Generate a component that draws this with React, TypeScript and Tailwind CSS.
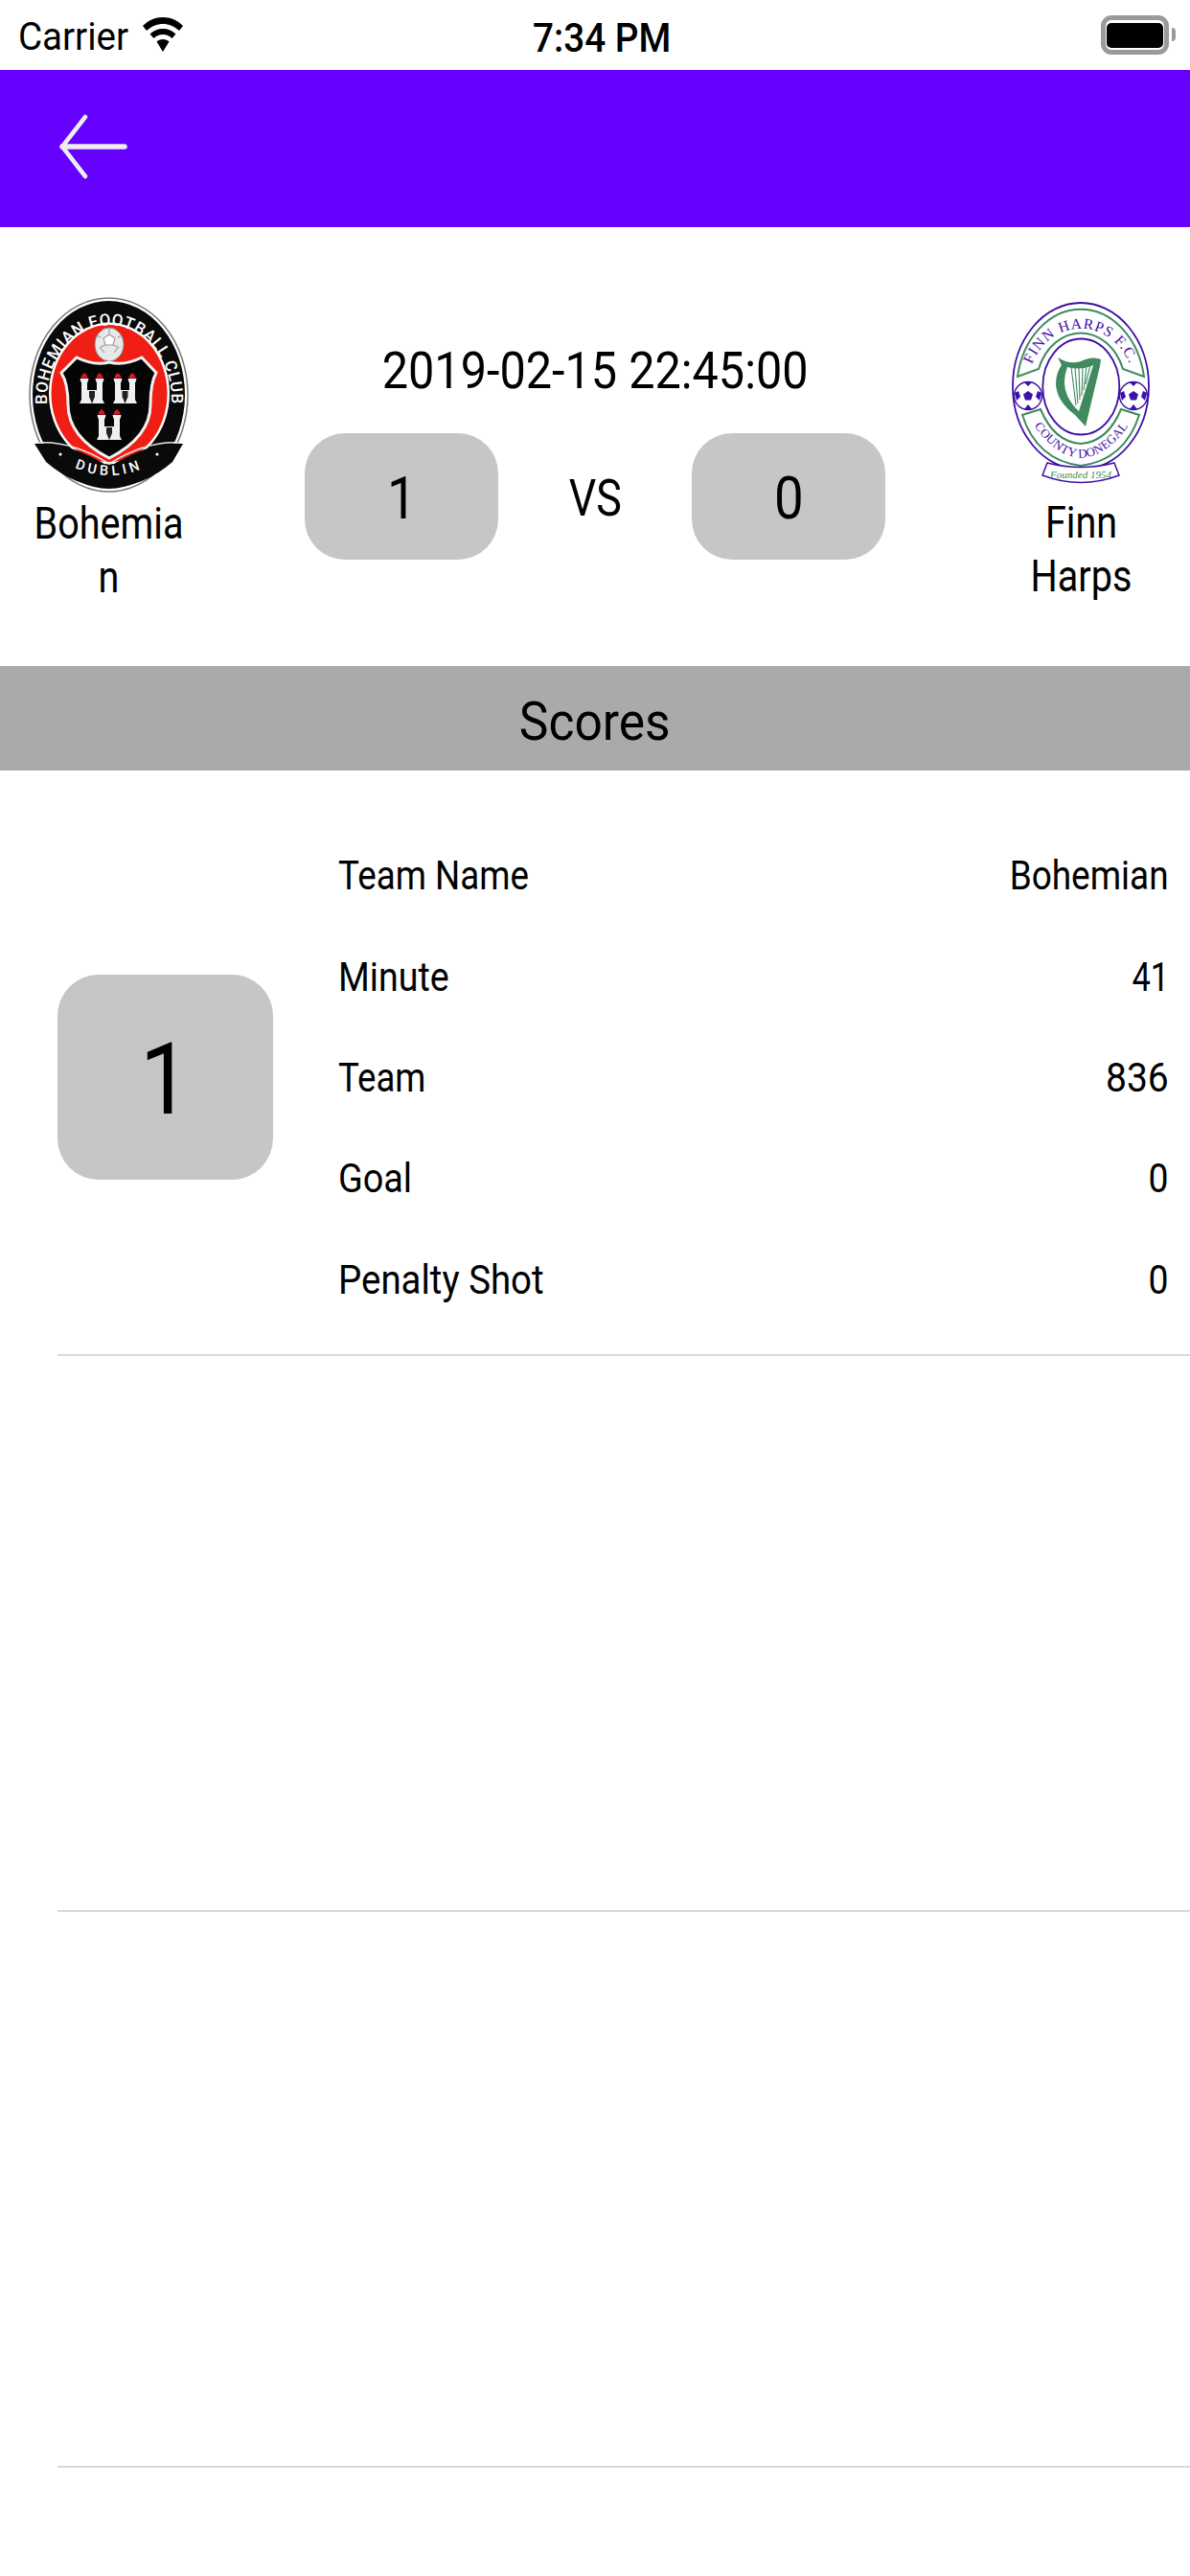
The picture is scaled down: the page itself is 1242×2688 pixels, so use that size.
function Tower({ x, y }: { x: number; y: number }) {
  return (
    <g>
      <path d={`M${x} ${y - 1}c2.500 2 3.500 3.500 3.500 5.500h-7c0-2 1-3.500 3.500-5.500z`} fill="#e3141c" />
      <path d={`M${x - 4.500} ${y + 5}h9l-1 4h-0.500v18l2 4h-10l2-4v-18h-0.500z`} fill="#f0f0f0" />
    </g>
  );
}

function TowerPair({ a, b, y }: { a: number; b: number; y: number }) {
  const m = (a + b) / 2;
  return (
    <g>
      <rect x={a} y={y + 17} width={b - a} height={14} fill="#f0f0f0" />
      <path d={`M${m - 3} ${y + 18}h6v6l-3 7-3-7z`} fill="#222" />
      <Tower x={a} y={y} />
      <Tower x={b} y={y} />
    </g>
  );
}

function BohemianLogo() {
  return (
    <svg width="167" height="204" viewBox="0 0 167 204" className="shrink-0">
      <defs>
        <path id="boh-top" d="M24 136 A65 77 0 1 1 144 136" />
        <path id="boh-bot" d="M36 172 Q84 200 132 172" />
      </defs>
      <ellipse cx="83.500" cy="102" rx="82.500" ry="101" fill="#fff" stroke="#777" strokeWidth="1.500" />
      <ellipse cx="83.500" cy="102" rx="79.500" ry="98" fill="#0a0a0a" />
      <ellipse cx="84" cy="100.500" rx="63" ry="74" fill="#fff" />
      <ellipse cx="84" cy="100.500" rx="60.500" ry="71.500" fill="#f01e14" />
      <path d="M6 153 Q40 150 84 177 Q128 150 161 153 L150 172 Q120 198 84 199 Q48 198 18 172 Z" fill="#0a0a0a" />
      <path d="M11 152 Q45 150 84 174 Q123 150 156 152" fill="none" stroke="#e8e8e8" strokeWidth="1.500" />
      <ellipse cx="84" cy="49.500" rx="15" ry="17.500" fill="#e8e8e8" stroke="#888" strokeWidth="1" />
      <path d="M84 39l6 4-2 7h-8l-2-7zM74 52l5 6M94 52l-5 6M75 42l-4-2M93 42l4-2M84 39v-6M80 50l-5 2M88 50l5 2" fill="#fff" stroke="#999" strokeWidth="1.100" />
      <path d="M34 79 L50 63 Q68 72 84 68 Q100 72 118 63 L133 79 Q127 90 127 112 Q127 146 84 168 Q41 146 41 112 Q41 90 34 79 Z" fill="#050505" stroke="#f2f2f2" strokeWidth="3" />
      <TowerPair a={58} b={74} y={80} />
      <TowerPair a={93} b={108} y={80} />
      <TowerPair a={76} b={92} y={118} />
      <text fill="#fff" fontSize="17" fontWeight="500" letterSpacing="0.6" className="font-['Roboto',sans-serif]">
        <textPath href="#boh-top" startOffset="50%" textAnchor="middle">BOHEMIAN FOOTBALL CLUB</textPath>
      </text>
      <text fill="#fff" fontSize="14.500" fontWeight="500" letterSpacing="4" className="font-['Roboto',sans-serif]">
        <textPath href="#boh-bot" startOffset="50%" textAnchor="middle">DUBLIN</textPath>
      </text>
      <circle cx="33" cy="164" r="1.600" fill="#fff" />
      <circle cx="134" cy="164" r="1.600" fill="#fff" />
    </svg>
  );
}

function Ball({ cx, cy }: { cx: number; cy: number }) {
  return (
    <g>
      <circle cx={cx} cy={cy} r={14.500} fill="#fff" stroke="#3d10a8" strokeWidth="1.400" />
      <path d={`M${cx} ${cy - 5}l5 3.500-2 6h-6l-2-6z`} fill="#3d10a8" />
      <path d={`M${cx - 4} ${cy - 14}h8l-4 4zM${cx - 14} ${cy - 3}l4-2 2 6-4 4zM${cx + 14} ${cy - 3}l-4-2-2 6 4 4zM${cx - 4} ${cy + 14}l4-5 4 5z`} fill="#3d10a8" />
    </g>
  );
}

function FinnLogo() {
  return (
    <svg width="144" height="196" viewBox="0 0 144 196" className="shrink-0">
      <defs>
        <path id="finn-top" d="M19.500 70 A55 60 0 0 1 124.500 70" />
        <path id="finn-bot" d="M20 125 Q72 200 125 125" />
      </defs>
      <ellipse cx="72" cy="88" rx="71" ry="87" fill="#fff" stroke="#3d10a8" strokeWidth="1.800" />
      <path d="M6 78 A67 85 0 0 1 138 78 L116 70 A47 58 0 0 0 28 70 Z" fill="#fff" stroke="#3f8a5f" strokeWidth="2" />
      <path d="M11 118 Q26 165 72 171 Q118 165 133 118 L114 112 Q100 146 72 148 Q44 146 30 112 Z" fill="#fff" stroke="#3f8a5f" strokeWidth="2" />
      <ellipse cx="72.300" cy="88.500" rx="40" ry="50" fill="#fff" stroke="#3d10a8" strokeWidth="1.800" />
      <text fill="#3d10a8" fontSize="15.500" fontFamily="'Liberation Serif',serif" letterSpacing="1">
        <textPath href="#finn-top" startOffset="50%" textAnchor="middle">FINN HARPS F.C.</textPath>
      </text>
      <text fill="#3d10a8" fontSize="13" fontFamily="'Liberation Serif',serif" letterSpacing="0.2">
        <textPath href="#finn-bot" startOffset="50%" textAnchor="middle">COUNTY DONEGAL</textPath>
      </text>
      <Ball cx={17} cy={98} />
      <Ball cx={127} cy={98} />
      <path d="M48 58 Q60 66 72 62 Q84 56 93 60 L92 67 L77 130 L66 118 Q47 104 46 86 Q46 74 52 66 Z" fill="#3f8a5f" />
      <path d="M58 68 Q52 84 58 98 Q63 108 70 114 L85 66 Q72 72 58 68 Z" fill="#fff" />
      <path d="M62 68L67 108M66 69L69 106M70 69L71 102M74 68L73 98M78 67L75 92M82 66L77 86" stroke="#3f8a5f" strokeWidth="1.100" fill="none" />
      <path d="M37 168 Q72 177 107 168 L112 181 Q72 196 32 181 Z" fill="#fff" stroke="#3d10a8" strokeWidth="1.500" />
      <text x="72" y="184" fill="#3f8a5f" fontSize="11" textAnchor="middle" fontFamily="'Liberation Serif',serif" fontStyle="italic">Founded 1954</text>
    </svg>
  );
}

function Row({ label, value, labelClass, valueClass }: { label: string; value: string; labelClass: string; valueClass: string }) {
  return (
    <div className="flex justify-between items-center h-[105.300px] text-[42px] leading-none text-black">
      <span className={`inline-block origin-left ${labelClass}`}>{label}</span>
      <span className={`inline-block origin-right ${valueClass}`}>{value}</span>
    </div>
  );
}

function Pill({ v }: { v: string }) {
  return (
    <div className="w-[202px] h-[132px] bg-[#c6c6c6] rounded-[42px] flex items-center justify-center text-[62px] leading-none pt-[4px]">
      <span className="inline-block scale-x-[0.88]">{v}</span>
    </div>
  );
}

export default function App() {
  return (
    <div className="w-[1242px] h-[2688px] bg-white overflow-hidden text-black font-['Roboto',sans-serif]">
      <div className="h-[73px] flex items-center relative pl-[19px]">
        <span className="text-[41px] leading-none pt-[4px] inline-block origin-left scale-x-[0.94]">Carrier</span>
        <svg width="42" height="36" viewBox="0 0 42 36" className="ml-[8px] -mt-[2px]" fill="#000">
          <path d="M21 0C13 0 6 3 0 9l4 5c5-4.500 11-7 17-7s12 2.500 17 7l4-5C36 3 29 0 21 0z" />
          <path d="M21 12c-5.500 0-10 2-13.500 5.500l4 4.500c2.500-2.500 6-4 9.500-4s7 1.500 9.500 4l4-4.500C31 14 26.500 12 21 12z" />
          <path d="M21 23c-3 0-5 1-6.500 2.500L21 36l6.500-10.500C26 24 24 23 21 23z" />
        </svg>
        <span className="absolute left-[556px] top-[18px] text-[43px] leading-none font-medium inline-block origin-left scale-x-[0.9]">7:34 PM</span>
        <div className="absolute left-[1149px] top-[16px] w-[71px] h-[41px] border-[5px] border-[#9a9a9a] rounded-[11px] flex items-center justify-center">
          <div className="w-[59px] h-[26px] bg-black rounded-[5px]" />
        </div>
        <div className="absolute left-[1223px] top-[29px] w-[4px] h-[14px] bg-[#9a9a9a] rounded-r-[4px]" />
      </div>

      <div className="h-[164px] bg-[#6600ff] flex items-center pl-[60px]">
        <svg width="76" height="68" viewBox="0 0 76 68" fill="none" stroke="#eeeeee" strokeLinecap="round" strokeLinejoin="round" className="-mt-[4px]">
          <path d="M29 3L5 34L29 65" strokeWidth="4.500" />
          <path d="M5 34H70" strokeWidth="5.500" />
        </svg>
      </div>

      <div className="h-[458px] flex pt-[73px]">
        <div className="w-[170px] ml-[28px] shrink-0 flex flex-col items-center">
          <BohemianLogo />
          <div className="w-[195px] shrink-0 text-center text-[46px] leading-[56px] break-all mt-[4px] scale-x-[0.86]">Bohemian</div>
        </div>
        <div className="flex-1 flex flex-col items-center pt-[50px] pl-[1px]">
          <div className="text-[54px] leading-none whitespace-nowrap scale-x-[0.9]">2019-02-15 22:45:00</div>
          <div className="flex items-center mt-[38px]">
            <Pill v="1" />
            <div className="w-[202px] text-center text-[54px] leading-none pt-[4px]"><span className="inline-block scale-x-[0.83]">VS</span></div>
            <Pill v="0" />
          </div>
        </div>
        <div className="w-[170px] mr-[29px] shrink-0 flex flex-col items-center pt-[5px]">
          <FinnLogo />
          <div className="text-center text-[46px] leading-[56px] mt-[6px] scale-x-[0.86]">Finn<br />Harps</div>
        </div>
      </div>

      <div className="h-[109px] bg-[#aaaaaa] flex items-center justify-center text-[56px] leading-none pt-[6px]">
        <span className="inline-block scale-x-[0.92]">Scores</span>
      </div>

      <div className="pt-[31px]">
        <div className="h-[580px] ml-[60px] pr-[22px] border-b-2 border-[#d8d8d8] flex items-center">
          <div className="w-[225px] h-[214px] bg-[#c6c6c6] rounded-[43px] flex items-center justify-center text-[104px] leading-none shrink-0 pt-[6px]">
            <span className="inline-block scale-x-[0.9]">1</span>
          </div>
          <div className="flex-1 ml-[68px] pt-[2px]">
            <Row label="Team Name" value="Bohemian" labelClass="scale-x-[0.875]" valueClass="scale-x-[0.88]" />
            <Row label="Minute" value="41" labelClass="scale-x-[0.895]" valueClass="scale-x-[0.82]" />
            <Row label="Team" value="836" labelClass="scale-x-[0.87]" valueClass="scale-x-[0.93]" />
            <Row label="Goal" value="0" labelClass="scale-x-[0.9]" valueClass="scale-x-[0.89]" />
            <Row label="Penalty Shot" value="0" labelClass="scale-x-[0.915]" valueClass="scale-x-[0.89]" />
          </div>
        </div>
        <div className="h-[580px] ml-[60px] border-b-2 border-[#d8d8d8]" />
        <div className="h-[580px] ml-[60px] border-b-2 border-[#d8d8d8]" />
      </div>
    </div>
  );
}
